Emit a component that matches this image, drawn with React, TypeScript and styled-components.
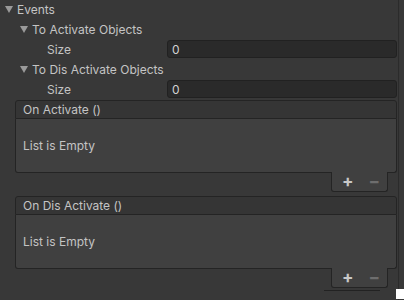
import React from 'react';
import styled, { createGlobalStyle } from 'styled-components';

const Global = createGlobalStyle`
  html, body {
    margin: 0;
    background: #383838;
    overflow: hidden;
  }
  body {
    font-family: Inter, "Noto Sans", sans-serif;
    font-size: 12px;
    color: #c4c4c4;
  }
  * { box-sizing: border-box; }
`;

const Inspector = styled.div`
  width: 399px;
  height: 300px;
  border-right: 1px solid #2b2b2b;
  display: flex;
  flex-direction: column;
`;

const Rows = styled.div`
  margin-top: -1px;
  display: flex;
  flex-direction: column;
`;

const Row = styled.div<{ $indent: number }>`
  height: 20px;
  display: flex;
  align-items: center;
  padding-left: ${(p) => p.$indent}px;
`;

const Arrow = styled.span`
  width: 0;
  height: 0;
  border-left: 4px solid transparent;
  border-right: 4px solid transparent;
  border-top: 7px solid #9a9a9a;
  margin-right: 4px;
  margin-top: 1px;
`;

const Label = styled.span`
  width: 120px;
`;

const Field = styled.div`
  flex: 1;
  height: 18px;
  margin-right: 1px;
  background: #2a2a2a;
  border: 1px solid #212121;
  border-radius: 3px;
  display: flex;
  align-items: center;
  padding-left: 4px;
  color: #d2d2d2;
`;

const EventBox = styled.div`
  margin: 1px 1px 0 15px;
  display: flex;
  flex-direction: column;
`;

const Header = styled.div`
  height: 19px;
  background: #353535;
  border: 1px solid #242424;
  border-radius: 3px 3px 0 0;
  display: flex;
  align-items: center;
  padding-left: 7px;
`;

const Body = styled.div`
  height: 54px;
  background: #404040;
  border: 1px solid #242424;
  border-top: none;
  border-radius: 0 0 3px 3px;
  display: flex;
  align-items: center;
  padding-left: 7px;
`;

const FooterRow = styled.div`
  display: flex;
  justify-content: flex-end;
  padding-right: 9px;
`;

const Footer = styled.div`
  width: 57px;
  height: 20px;
  margin-top: -1px;
  background: #404040;
  border: 1px solid #242424;
  border-top: none;
  border-radius: 0 0 3px 3px;
  display: flex;
  align-items: center;
  gap: 15px;
  padding-left: 10px;
`;

const Sign = styled.span<{ $dim?: boolean }>`
  font-size: 17px;
  font-weight: 700;
  color: ${(p) => (p.$dim ? '#6e6e6e' : '#c8c8c8')};
  line-height: 1;
`;

const Spacer = styled.div`
  height: 3px;
`;

const Tail = styled.div`
  margin-top: 1px;
  display: flex;
  align-items: flex-start;
  justify-content: flex-end;
`;

const Shadow = styled.div`
  width: 56px;
  height: 1px;
  margin-top: 1px;
  background: #222;
  margin-right: 16px;
`;

const Corner = styled.div`
  width: 8px;
  height: 10px;
  background: #fff;
  margin-right: -6px;
`;

const Event = ({ title }: { title: string }) => (
  <EventBox>
    <Header>{title}</Header>
    <Body>List is Empty</Body>
    <FooterRow>
      <Footer>
        <Sign>+</Sign>
        <Sign $dim>−</Sign>
      </Footer>
    </FooterRow>
  </EventBox>
);

export default function App() {
  return (
    <>
      <Global />
      <Inspector>
        <Rows>
          <Row $indent={5}>
            <Arrow />
            Events
          </Row>
          <Row $indent={20}>
            <Arrow />
            To Activate Objects
          </Row>
          <Row $indent={47}>
            <Label>Size</Label>
            <Field>0</Field>
          </Row>
          <Row $indent={20}>
            <Arrow />
            To Dis Activate Objects
          </Row>
          <Row $indent={47}>
            <Label>Size</Label>
            <Field>0</Field>
          </Row>
        </Rows>
        <Event title="On Activate ()" />
        <Spacer />
        <Event title="On Dis Activate ()" />
        <Tail>
          <Shadow />
          <Corner />
        </Tail>
      </Inspector>
    </>
  );
}
